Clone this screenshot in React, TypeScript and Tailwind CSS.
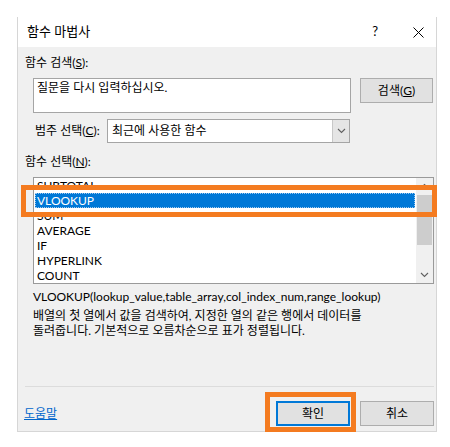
import React from 'react';

const font = { fontFamily: 'Lato, "Noto Sans CJK KR", sans-serif' };

const items = ['SUBTOTAL', 'VLOOKUP', 'SUM', 'AVERAGE', 'IF', 'HYPERLINK', 'COUNT'];

function Chevron({ up = false }: { up?: boolean }) {
  return (
    <svg width="9" height="6" viewBox="0 0 9 6" className={up ? 'rotate-180' : ''}>
      <path d="M1 1 L4.5 4.5 L8 1" fill="none" stroke="#606060" strokeWidth="1.1" />
    </svg>
  );
}

export default function FunctionWizard() {
  return (
    <div className="relative w-[450px] h-[447px] bg-white text-[12px] text-black overflow-hidden" style={font}>
      <div className="ml-[17px] mt-[17px] w-[420px] h-[415px] border-x border-b border-[#d6d6d6] flex flex-col">
        {/* title bar */}
        <div className="h-[30px] bg-white flex items-center pl-[9px] pr-[12px] text-[13px]">
          <span>함수 마법사</span>
          <span className="ml-auto mr-[35px] text-[13px]">?</span>
          <svg width="11" height="11" viewBox="0 0 11 11">
            <path d="M0.5 0.5 L10.5 10.5 M10.5 0.5 L0.5 10.5" stroke="#000" strokeWidth="1" />
          </svg>
        </div>

        {/* body */}
        <div className="flex-1 bg-[#f0f0f0] flex flex-col">
          <div className="mt-[8px] ml-[7px] h-[16px] leading-[16px]">
            함수 검색(<span className="underline">S</span>):
          </div>

          <div className="mt-[7px] flex items-start">
            <div className="ml-[15px] w-[318px] h-[35px] bg-white border border-[#a5a5a5] pl-[3px] leading-[17px]">
              질문을 다시 입력하십시오.
            </div>
            <div className="ml-[9px] w-[73px] h-[25px] bg-[#e1e1e1] border border-[#adadad] flex items-center justify-center">
              검색(<span className="underline">G</span>)
            </div>
          </div>

          <div className="mt-[6px] flex items-center h-[24px]">
            <div className="ml-[17px] w-[72px]">
              범주 선택(<span className="underline">C</span>):
            </div>
            <div className="w-[243px] h-[24px] bg-white border border-[#a5a5a5] flex items-center">
              <span className="pl-[4px]">최근에 사용한 함수</span>
              <div className="ml-auto w-[17px] h-full bg-[#e5e5e5] border-l border-[#c8c8c8] flex items-center justify-center">
                <Chevron />
              </div>
            </div>
          </div>

          <div className="mt-[11px] ml-[7px] h-[16px] leading-[16px]">
            함수 선택(<span className="underline">N</span>):
          </div>

          <div className="mt-[7px] ml-[15px] w-[401px] h-[107px] bg-white border border-[#9a9a9a] flex">
            <div className="flex-1 px-[1px] overflow-hidden">
              {items.map((it) => (
                <div
                  key={it}
                  className={
                    it === 'VLOOKUP'
                      ? 'h-[15px] leading-[15px] pl-[2px] bg-[#0078d7] text-white outline-1 outline-dotted outline-[#9fc9ee] -outline-offset-1'
                      : 'h-[15px] leading-[15px] pl-[2px]'
                  }
                >
                  {it}
                </div>
              ))}
            </div>
            <div className="w-[17px] h-full bg-[#f0f0f0] flex flex-col items-center">
              <div className="h-[16px] flex items-center justify-center">
                <Chevron up />
              </div>
              <div className="w-[15px] h-[50px] bg-[#cdcdcd] mt-[1px]" />
              <div className="mt-auto h-[16px] flex items-center justify-center">
                <Chevron />
              </div>
            </div>
          </div>

          <div className="mt-[5px] ml-[15px] h-[16px] leading-[16px]">
            VLOOKUP(lookup_value,table_array,col_index_num,range_lookup)
          </div>
          <div className="mt-[3px] ml-[15px] leading-[15px]">
            <div>배열의 첫 열에서 값을 검색하여, 지정한 열의 같은 행에서 데이터를</div>
            <div>돌려줍니다. 기본적으로 오름차순으로 표가 정렬됩니다.</div>
          </div>

          <div className="mt-auto ml-[7px] mr-[2px] h-px bg-[#dcdcdc]" />

          <div className="mt-[14px] mb-[5px] h-[25px] flex items-center">
            <span className="ml-[6px] text-[#0066cc] underline">도움말</span>
            <div className="ml-auto w-[74px] h-[25px] bg-[#e1e1e1] border-2 border-[#0078d7] flex items-center justify-center">
              확인
            </div>
            <div className="ml-[10px] mr-[2px] w-[74px] h-[25px] bg-[#e1e1e1] border border-[#adadad] flex items-center justify-center">
              취소
            </div>
          </div>
        </div>
      </div>

      {/* highlight marks */}
      <div className="absolute left-[21px] top-[185px] w-[416px] h-[32px] border-[5px] border-[#f47b20]" />
      <div className="absolute left-[265px] top-[392px] w-[91px] h-[40px] border-[5px] border-[#f47b20]" />
    </div>
  );
}
